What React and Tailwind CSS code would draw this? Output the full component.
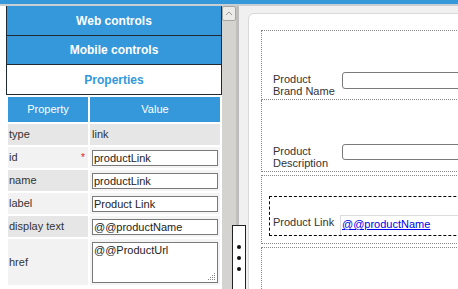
import React from 'react';

const rows = [
  { name: 'type', kind: 'text', value: 'link', bg: 'bg-[#e6e6e6]' },
  { name: 'id', kind: 'input', value: 'productLink', bg: 'bg-[#f2f2f2]', required: true },
  { name: 'name', kind: 'input', value: 'productLink', bg: 'bg-[#e6e6e6]' },
  { name: 'label', kind: 'input', value: 'Product Link', bg: 'bg-[#f2f2f2]' },
  { name: 'display text', kind: 'input', value: '@@productName', bg: 'bg-[#e6e6e6]' },
];

const PropInput = ({ value }) => (
  <div className="w-[126px] h-[16px] border border-[#7a7a7a] bg-white px-[1px] leading-[14px] text-[#222] overflow-hidden whitespace-nowrap">
    {value}
  </div>
);

const SideButton = ({ children, active, h }) => (
  <div
    className={`${h} flex items-center justify-center border-x border-b border-[#1f2a33] text-[12px] font-bold ${
      active ? 'bg-white text-[#3498db]' : 'bg-[#3498db] text-white'
    }`}
  >
    {children}
  </div>
);

const App = () => {
  return (
    <div className="w-[458px] h-[289px] overflow-hidden relative bg-white text-[11px] font-['Liberation_Sans',Arial,sans-serif]">
      <div className="h-[4px] bg-[#3498db]" />
      <div className="h-[2px] bg-[#c9ced3]" />
      <div className="flex h-[283px]">
        {/* Left toolbox */}
        <div className="flex w-[237px] bg-white">
          <div className="w-[222px] pl-[6px] flex flex-col">
            <SideButton h="h-[30px]">Web controls</SideButton>
            <SideButton h="h-[29px]">Mobile controls</SideButton>
            <SideButton h="h-[30px]" active>Properties</SideButton>

            <div className="grid grid-cols-[80px_130px] gap-[2px] pt-[2px] pl-[2px] text-[#333]">
              <div className="h-[25px] bg-[#3498db] text-white flex items-center justify-center">Property</div>
              <div className="h-[25px] bg-[#3498db] text-white flex items-center justify-center">Value</div>
              {rows.map(r => (
                <React.Fragment key={r.name}>
                  <div className={`h-[21px] ${r.bg} flex items-center justify-between pl-[1px] pr-[3px]`}>
                    <span>{r.name}</span>
                    {r.required && <span className="text-[#e02020] text-[10px] leading-none">*</span>}
                  </div>
                  <div className={`h-[21px] ${r.kind === 'text' ? r.bg : 'bg-[#f4f4f4]'} flex items-center pl-[2px]`}>
                    {r.kind === 'text' ? r.value : <PropInput value={r.value} />}
                  </div>
                </React.Fragment>
              ))}
              <div className="h-[46px] bg-[#f2f2f2] flex items-center pl-[1px]">href</div>
              <div className="h-[46px] bg-[#f4f4f4] pl-[2px] pt-[3px]">
                <div className="relative w-[126px] h-[41px] border border-[#7a7a7a] bg-white px-[1px] leading-[14px] text-[#222]">
                  @@ProductUrl
                  <svg className="absolute right-[1px] bottom-[1px]" width="8" height="8" viewBox="0 0 8 8">
                    <g fill="#888">
                      <rect x="6" y="0" width="1" height="1" />
                      <rect x="4" y="2" width="1" height="1" />
                      <rect x="6" y="2" width="1" height="1" />
                      <rect x="2" y="4" width="1" height="1" />
                      <rect x="4" y="4" width="1" height="1" />
                      <rect x="6" y="4" width="1" height="1" />
                      <rect x="0" y="6" width="1" height="1" />
                      <rect x="2" y="6" width="1" height="1" />
                      <rect x="4" y="6" width="1" height="1" />
                      <rect x="6" y="6" width="1" height="1" />
                    </g>
                  </svg>
                </div>
              </div>
            </div>
          </div>

          {/* Scrollbar */}
          <div className="w-[15px] bg-[#d5d3cf] flex flex-col items-center border-r border-[#c2c0bc]">
            <div className="w-[14px] h-[15px] mt-0 bg-[#ecebe9] border border-[#a7a6a2] rounded-[2px] flex items-center justify-center">
              <svg width="8" height="5" viewBox="0 0 8 5">
                <path d="M1 4 L4 1 L7 4" fill="none" stroke="#9a9a9a" strokeWidth="1" />
              </svg>
            </div>
          </div>
        </div>

        <div className="w-[2px] bg-[#bdbdbd]" />

        {/* Design surface */}
        <div className="flex-1 bg-[#f0f0f0] pl-[9px] pt-[7px] overflow-hidden">
          <div className="w-[300px] h-[300px] bg-white border border-[#d9d9d9] rounded-tl-[6px] pl-[12px] pt-[16px] text-[#333]">
            <div className="h-[70px] border border-dotted border-[#888] flex items-end pl-[11px] pb-[2px]">
              <div className="w-[69px] leading-[12px]">Product<br />Brand Name</div>
              <div className="w-[200px] h-[17px] border border-[#7a7a7a] rounded-[3px] bg-white self-start mt-[41px]" />
            </div>
            <div className="h-[72px] border border-t-0 border-dotted border-[#888] flex items-end pl-[11px] pb-[2px]">
              <div className="w-[69px] leading-[12px]">Product<br />Description</div>
              <div className="w-[200px] h-[16px] border border-[#7a7a7a] rounded-[3px] bg-white self-start mt-[44px]" />
            </div>
            <div className="h-[69px] mt-[3px] border border-dotted border-[#888] pt-[20px] pl-[7px]">
              <div className="h-[40px] border border-dashed border-black flex items-end">
                <div className="w-[70px] pl-[3px] pb-[7px] leading-[12px]">Product Link</div>
                <div className="flex-1 h-[20px] border-t border-l border-[#dcdcdc] pl-[1px] pt-[2px] leading-[12px]">
                  <a className="text-[#0000ee] underline">@@productName</a>
                </div>
              </div>
            </div>
            <div className="h-[60px] mt-[3px] border border-dotted border-[#888]" />
          </div>
        </div>
      </div>

      {/* Splitter handle */}
      <div className="absolute left-[232px] top-[225px] w-[14px] h-[70px] bg-white border border-[#222] flex flex-col items-center pt-[19px] gap-[7px]">
        <div className="w-[4px] h-[4px] rounded-full bg-[#111]" />
        <div className="w-[4px] h-[4px] rounded-full bg-[#111]" />
        <div className="w-[4px] h-[4px] rounded-full bg-[#111]" />
      </div>
    </div>
  );
};

export default App;
